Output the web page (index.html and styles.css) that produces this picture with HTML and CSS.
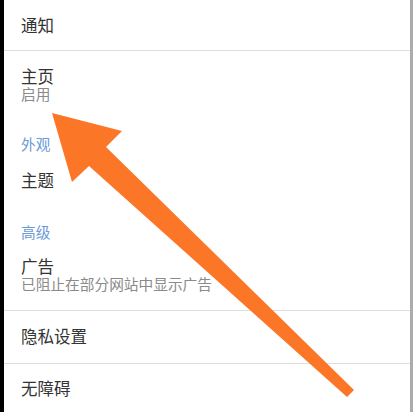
FILE: index.html
```html
<!DOCTYPE html>
<html lang="zh-CN">
<head>
<meta charset="utf-8">
<link rel="stylesheet" href="styles.css">
</head>
<body>
<div class="frame">
  <div class="edge-left"></div>
  <div class="list">
    <div class="item first"><div class="title">通知</div></div>
    <div class="item two home"><div class="title">主页</div><div class="sub">启用</div></div>
    <div class="header">外观</div>
    <div class="item plain"><div class="title">主题</div></div>
    <div class="header">高级</div>
    <div class="item two ads"><div class="title">广告</div><div class="sub">已阻止在部分网站中显示广告</div></div>
    <div class="item single"><div class="title">隐私设置</div></div>
    <div class="item final"><div class="title">无障碍</div></div>
  </div>
  <div class="edge-right"></div>
  <svg class="arrow" width="413" height="412" viewBox="0 0 413 412">
    <polygon points="52,113 122,131 106,147 354,390 347,397 89,166 72,182" fill="#fc7628"/>
  </svg>
</div>
</body>
</html>
```
FILE: styles.css
```css
html, body {
  margin: 0;
  padding: 0;
  background: #fff;
}
.frame {
  position: relative;
  display: flex;
  width: 413px;
  height: 412px;
  overflow: hidden;
  font-family: "Liberation Sans", "Noto Sans CJK SC", sans-serif;
}
.edge-left {
  width: 4px;
  background: #000;
  flex: none;
}
.edge-right {
  width: 3px;
  background: #ababab;
  flex: none;
}
.list {
  flex: 1;
  display: flex;
  flex-direction: column;
  background: #fff;
}
.item {
  padding-left: 17px;
}
.title {
  font-size: 16.5px;
  line-height: 20px;
  color: #333;
  white-space: nowrap;
}
.sub {
  font-size: 14.7px;
  line-height: 18px;
  color: #8a8a8a;
  white-space: nowrap;
}
.item.first {
  box-sizing: border-box;
  height: 51px;
  padding-top: 2px;
  display: flex;
  align-items: center;
  border-bottom: 1px solid #dedede;
}
.item.two .title {
  line-height: 18px;
}
.item.home {
  padding-top: 17px;
  padding-bottom: 15px;
}
.header {
  padding: 17px 0 0 17px;
  font-size: 14.7px;
  line-height: 18px;
  color: #6a9ad8;
}
.item.plain {
  padding-top: 17px;
  padding-bottom: 16px;
}
.item.ads {
  padding-top: 16px;
  padding-bottom: 16px;
  border-bottom: 1px solid #dedede;
}
.item.single {
  padding-top: 16px;
  padding-bottom: 16px;
  border-bottom: 1px solid #dedede;
}
.item.final {
  padding-top: 15px;
}
.arrow {
  position: absolute;
  left: 0;
  top: 0;
  pointer-events: none;
}
```
